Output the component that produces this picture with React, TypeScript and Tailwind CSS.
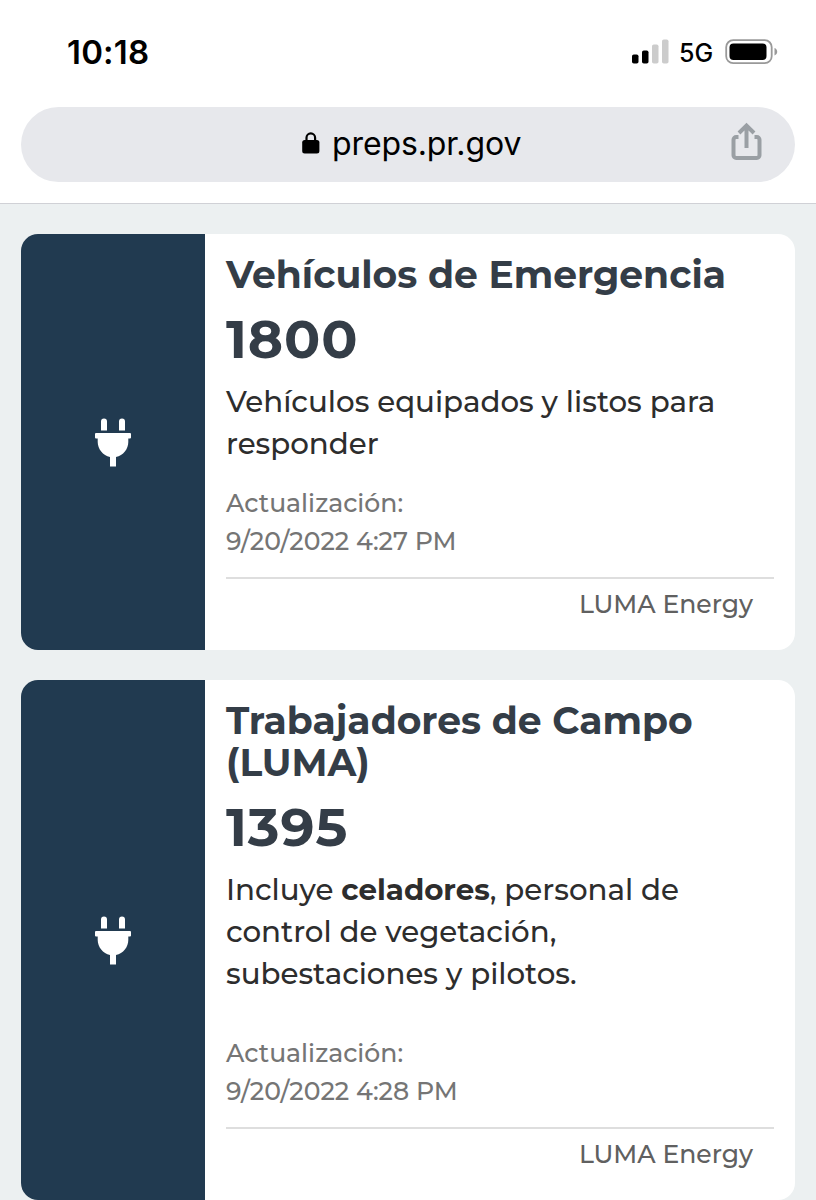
import type { ReactNode } from 'react';

interface IProps {
  title: ReactNode;
  count: string;
  updated: string;
  updatedClass: string;
  height: string;
  children: ReactNode;
}

function PlugIcon() {
  return (
    <svg width="37" height="49" viewBox="0 0 37 49" fill="white" className="mt-px">
      <path d="M6 12.500V3.500a3 3 0 0 1 6 0v9zM24 12.500V3.500a3 3 0 0 1 6 0v9z" />
      <path d="M1 15h34a1 1 0 0 1 1 1v3.500a1 1 0 0 1-1 1H33.300V24c0 7-5 13.500-12.300 15V48.500h-6V39C8 37.500 2.700 31 2.700 24v-3.500H1a1 1 0 0 1-1-1V16a1 1 0 0 1 1-1z" />
    </svg>
  );
}

function StatusBar() {
  return (
    <div className="flex h-[107px] items-start justify-between pl-[67px] pr-[38px]">
      <span className="mt-8 text-[33px] leading-10 font-semibold tracking-[0.2px]">10:18</span>
      <div className="mt-8 flex h-10 items-center">
        <svg width="39" height="26" viewBox="0 0 39 26">
          <rect x="1" y="15.500" width="6.500" height="9" rx="1.800" fill="#000" />
          <rect x="11" y="11.500" width="6.500" height="13" rx="1.800" fill="#000" />
          <rect x="21" y="5.500" width="6.500" height="19" rx="1.800" fill="#ccc" />
          <rect x="31" y="0.500" width="6.500" height="24" rx="1.800" fill="#ccc" />
        </svg>
        <span className="ml-[9px] w-[46px] pt-1 text-[25px] font-medium">5G</span>
        <svg width="53" height="26" viewBox="0 0 53 26">
          <rect x="1.200" y="1.200" width="45.500" height="23" rx="7" fill="none" stroke="#999" strokeWidth="1.800" />
          <rect x="4.500" y="4.500" width="37" height="16.500" rx="4" fill="#000" />
          <path d="M49.500 9c1.700.6 2.700 2 2.700 3.700s-1 3.100-2.700 3.700z" fill="#999" />
        </svg>
      </div>
    </div>
  );
}

function AddressBar() {
  return (
    <div className="mx-[21px] flex h-[75px] items-center rounded-full bg-[#e7e8ec] pr-[33px] pb-[5px] pl-[281px]">
      <svg width="18" height="22" viewBox="0 0 18 22" className="mt-0.5">
        <path d="M4.500 10V5.700a4.300 4.300 0 0 1 8.600 0V10" fill="none" stroke="#000" strokeWidth="2.200" />
        <rect x="0.200" y="8" width="17.200" height="13.500" rx="2.500" fill="#000" />
      </svg>
      <span className="ml-3 grow pt-1 text-[32px] leading-10 tracking-[-0.1px]">preps.pr.gov</span>
      <svg width="31" height="40" viewBox="0 0 31 40" fill="none" stroke="#9a9fa4" strokeWidth="4">
        <path d="M7.500 15H5.200A2.700 2.700 0 0 0 2.500 17.700V33.300a2.700 2.700 0 0 0 2.700 2.700H25.800a2.700 2.700 0 0 0 2.700-2.700V17.700A2.700 2.700 0 0 0 25.800 15H23.500" />
        <path d="M15.500 26V4M8 11l7.500-7.500 7.500 7.500" />
      </svg>
    </div>
  );
}

function Card({ title, count, updated, updatedClass, height, children }: IProps) {
  return (
    <div className={`flex overflow-hidden rounded-[17px] bg-white ${height}`}>
      <div className="flex w-[184px] shrink-0 items-center justify-center bg-[#213a50]">
        <PlugIcon />
      </div>
      <div className="grow px-[21px] pt-5 whitespace-nowrap">
        <h2 className="text-[37.66px] leading-[42px] font-bold text-[#343d47]">{title}</h2>
        <p className="mt-[13px] text-[53.5px] leading-[60px] font-bold tracking-[0.9px] text-[#343d47]">{count}</p>
        <p className="mt-3 text-[29.3px] leading-[42px] font-medium text-[#2d2d2d]">{children}</p>
        <div className={`text-[25.1px] leading-[38px] font-medium text-[#757575] ${updatedClass}`}>
          <p>Actualización:</p>
          <p>{updated}</p>
        </div>
        <div className="mt-[17px] border-t-2 border-[#dedede] pt-1.5 pr-[21px] text-right text-[25.1px] leading-[38px] font-medium text-[#606060]">
          <span>LUMA Energy</span>
        </div>
      </div>
    </div>
  );
}

export default function App() {
  return (
    <div className="h-[1200px] w-[816px] overflow-hidden bg-[#ecf0f1] font-['Montserrat','Inter',sans-serif] text-black">
      <div className="h-[204px] border-b border-[#d0d1d6] bg-white font-['Inter',sans-serif]">
        <StatusBar />
        <AddressBar />
      </div>
      <div className="flex flex-col gap-[30px] px-[21px] pt-[30px]">
        <Card
          title="Vehículos de Emergencia"
          count="1800"
          updated="9/20/2022 4:27 PM"
          updatedClass="mt-[19px]"
          height="h-[416px]"
        >
          Vehículos equipados y listos para
          <br />
          responder
        </Card>
        <Card
          title={<>Trabajadores de Campo<br />(LUMA)</>}
          count="1395"
          updated="9/20/2022 4:28 PM"
          updatedClass="mt-[39px]"
          height="h-[520px]"
        >
          Incluye <b>celadores</b>, personal de
          <br />
          control de vegetación,
          <br />
          subestaciones y pilotos.
        </Card>
      </div>
    </div>
  );
}
